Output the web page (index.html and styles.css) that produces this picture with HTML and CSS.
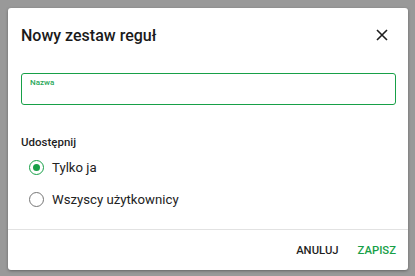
FILE: index.html
```html
<!DOCTYPE html>
<html lang="pl">
  <head>
    <meta charset="UTF-8" />
    <title>Nowy zestaw reguł</title>
    <link rel="stylesheet" href="styles.css">
  </head>
  <body>
    <!-- Dialog -->
    <div class="dialog">
      <div class="dialog-header">
        <h2 class="dialog-title">Nowy zestaw reguł</h2>
        <button class="close-button" aria-label="Zamknij">
          <svg width="12" height="12" viewBox="0 0 12 12">
            <path d="M1 1L11 11M11 1L1 11" stroke="#1f1f1f" stroke-width="1.6" fill="none" />
          </svg>
        </button>
      </div>

      <div class="dialog-body">
        <!-- Name field -->
        <div class="field">
          <label class="field-label" for="name">Nazwa</label>
          <input class="field-input" id="name" type="text" />
        </div>

        <!-- Share options -->
        <div class="share">
          <div class="share-title">Udostępnij</div>
          <label class="radio">
            <span class="radio-circle checked"></span>
            Tylko ja
          </label>
          <label class="radio">
            <span class="radio-circle"></span>
            Wszyscy użytkownicy
          </label>
        </div>
      </div>

      <div class="dialog-footer">
        <button class="text-button">ANULUJ</button>
        <button class="text-button primary">ZAPISZ</button>
      </div>
    </div>
  </body>
</html>
```

FILE: styles.css
```css
/* Reset and backdrop */
html,
body {
  margin: 0;
  padding: 0;
  height: 100%;
  overflow: hidden;
}

body {
  background: #999999;
  font-family: Roboto, "Noto Sans", sans-serif;
  color: #1f1f1f;
  padding: 8px;
  box-sizing: border-box;
}

/* Dialog card */
.dialog {
  width: 400px;
  height: 262px;
  background: #ffffff;
  border-radius: 3px;
  box-shadow: 0 1px 3px rgba(0, 0, 0, 0.35);
  display: flex;
  flex-direction: column;
}

.dialog-header {
  display: flex;
  justify-content: space-between;
  align-items: center;
  padding: 8px 16px 0 13px;
  height: 38px;
}

.dialog-title {
  margin: 0;
  font-size: 16px;
  font-weight: 500;
  color: #1a1a1a;
}

.close-button {
  background: none;
  border: none;
  padding: 4px;
  display: flex;
  cursor: pointer;
}

.dialog-body {
  flex: 1;
  padding: 19px 12px 0 13px;
}

/* Name field */
.field {
  position: relative;
}

.field-label {
  position: absolute;
  top: 5px;
  left: 9px;
  font-size: 8px;
  font-weight: 500;
  color: #2aa85a;
}

.field-input {
  width: 100%;
  height: 32px;
  box-sizing: border-box;
  border: 1.5px solid #17a047;
  border-radius: 3px;
  outline: none;
}

/* Share options */
.share {
  margin-top: 30px;
}

.share-title {
  font-size: 11.5px;
  font-weight: 500;
  margin-bottom: 2px;
}

.radio {
  display: flex;
  align-items: center;
  gap: 8px;
  height: 32px;
  padding-left: 8px;
  font-size: 13.2px;
  color: #222222;
}

.radio-circle {
  width: 13px;
  height: 13px;
  border: 1.6px solid #757575;
  border-radius: 50%;
  display: flex;
  align-items: center;
  justify-content: center;
}

.radio-circle.checked {
  border-color: #17a047;
}

.radio-circle.checked::after {
  content: "";
  width: 7px;
  height: 7px;
  border-radius: 50%;
  background: #17a047;
}

/* Footer */
.dialog-footer {
  border-top: 1px solid #e2e2e2;
  height: 40px;
  display: flex;
  justify-content: flex-end;
  align-items: center;
  gap: 19px;
  padding-right: 12px;
}

.text-button {
  background: none;
  border: none;
  padding: 0;
  font-family: inherit;
  font-size: 11.3px;
  font-weight: 500;
  color: #1f1f1f;
  cursor: pointer;
}

.text-button.primary {
  color: #17a047;
}
```
